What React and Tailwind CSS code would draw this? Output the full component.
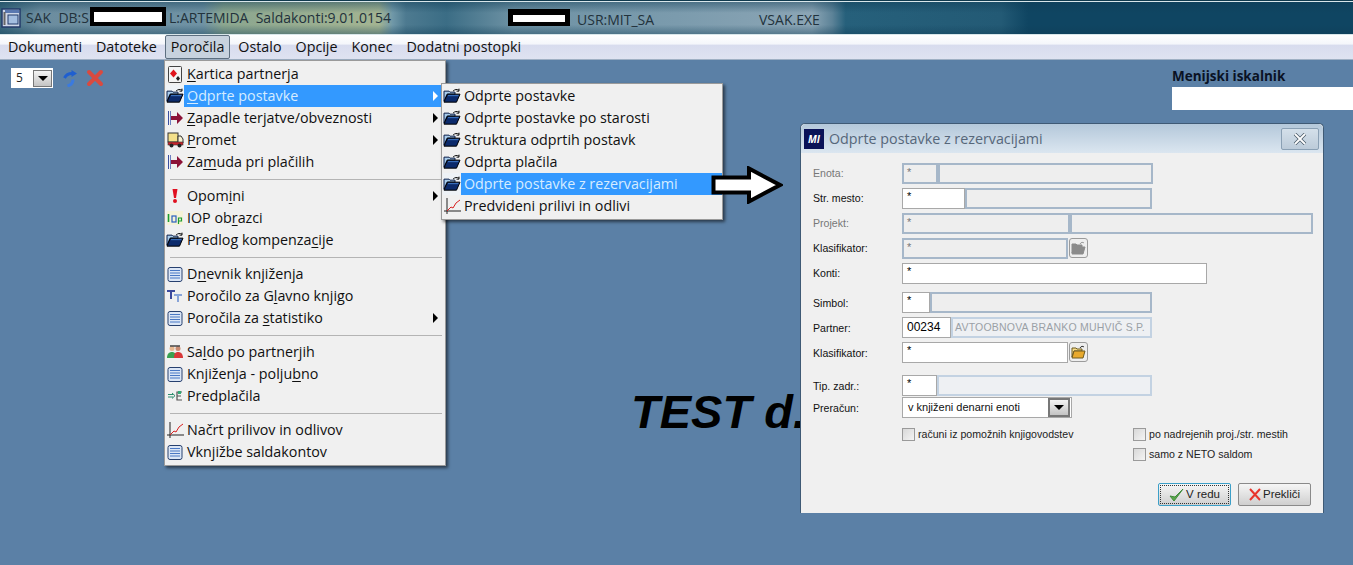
import React from "react";

const FONT = "font-['Open_Sans','Noto_Sans',sans-serif]";
const FORM = "font-['Liberation_Sans',sans-serif]";

function FolderIcon({ size = 18 }) {
  return (
    <svg width={size} height={size * 0.85} viewBox="0 0 18 15" className="shrink-0">
      <path d="M1 3h5l1 1h5v2H4L1 13z" fill="#a9cdec" stroke="#0a1f4a" strokeWidth="1" />
      <path d="M1 14l3.500-8H17l-3.500 8z" fill="#0b2a6b" stroke="#000" strokeWidth="1" />
      <path d="M5 7.500h10.500" stroke="#3f78c8" strokeWidth="1" />
      <path d="M10 3c2-2 4-2 6-1M16 0.500V3h-2.500" fill="none" stroke="#111" strokeWidth="1" />
    </svg>
  );
}
function CardIcon() {
  return (
    <svg width="16" height="17" viewBox="0 0 16 17" className="shrink-0">
      <rect x="1.500" y="0.500" width="13" height="16" rx="1" fill="#f4f4f4" stroke="#444" />
      <path d="M6.500 3.500l3.500 4-3.500 4-3.500-4z" fill="#e0141c" />
      <path d="M11 10l2 2.500L11 15l-2-2.500z" fill="#222" />
    </svg>
  );
}
function ArrowBarIcon() {
  return (
    <svg width="16" height="14" viewBox="0 0 16 14" className="shrink-0">
      <path d="M1.500 0v14" stroke="#3a4fa0" strokeWidth="1" />
      <path d="M3.500 0v14" stroke="#6d7fc0" strokeWidth="1" />
      <path d="M4 5h6V1l6 6-6 6V9H4z" fill="#8c1238" />
    </svg>
  );
}
function TruckIcon() {
  return (
    <svg width="17" height="16" viewBox="0 0 17 16" className="shrink-0">
      <rect x="1" y="1" width="10" height="9" fill="#f4e08a" stroke="#333" />
      <path d="M11 4h3l2 3v4H11z" fill="#f6f0d0" stroke="#333" />
      <rect x="1" y="10" width="15" height="3" fill="#c8242c" stroke="#333" strokeWidth="0.600" />
      <circle cx="4.500" cy="13.500" r="2" fill="#222" />
      <circle cx="12.500" cy="13.500" r="2" fill="#222" />
    </svg>
  );
}
function ExclamIcon() {
  return (
    <svg width="16" height="16" viewBox="0 0 16 16" className="shrink-0">
      <path d="M5.500 1h5L9 10H7z" fill="#e01020" />
      <circle cx="8" cy="13" r="2" fill="#e01020" />
    </svg>
  );
}
function IopIcon() {
  return (
    <svg width="16" height="14" viewBox="0 0 16 14" className="shrink-0">
      <rect x="0" y="0" width="16" height="14" fill="#f8f4c8" opacity="0.600" />
      <path d="M1.500 3v8" stroke="#1c9c30" strokeWidth="1.600" />
      <rect x="5" y="5" width="4" height="6" fill="none" stroke="#2a5fc0" strokeWidth="1.200" />
      <path d="M11.500 13V7h3v3h-3" fill="none" stroke="#1c9c30" strokeWidth="1.200" />
    </svg>
  );
}
function ListIcon() {
  return (
    <svg width="16" height="15" viewBox="0 0 16 15" className="shrink-0">
      <rect x="1" y="0.500" width="14" height="14" rx="2" fill="#dbe6f6" stroke="#27406f" />
      <path d="M3 3.500h10M3 6h10M3 8.500h10M3 11h10" stroke="#4a78c4" strokeWidth="1.200" />
    </svg>
  );
}
function TtIcon() {
  return (
    <svg width="16" height="14" viewBox="0 0 16 14" className="shrink-0">
      <path d="M0 1h8v2H5v7H3V3H0z" fill="#3c4a9c" />
      <path d="M7 5h8v2h-3v6h-2V7H7z" fill="#88a4d8" />
    </svg>
  );
}
function PeopleIcon() {
  return (
    <svg width="16" height="14" viewBox="0 0 16 14" className="shrink-0">
      <circle cx="5" cy="3.500" r="2.500" fill="#e8b890" />
      <circle cx="11" cy="3.500" r="2.500" fill="#c88a70" />
      <path d="M3 1h10" stroke="#444" strokeWidth="1.500" />
      <path d="M0 13c0-4 2-6 5-6s4 2 4 6z" fill="#3aa050" />
      <path d="M7 13c0-4 1-6 4-6s5 2 5 6z" fill="#d83838" />
    </svg>
  );
}
function PrepayIcon() {
  return (
    <svg width="15" height="10" viewBox="0 0 15 10" className="shrink-0">
      <path d="M0 3.500h5M0 6h5M4 2l3 2.700L4 7.500" fill="none" stroke="#2a8c6c" strokeWidth="1" />
      <path d="M14 1H9v8h5M9 5h4" fill="none" stroke="#555" strokeWidth="1.200" />
      <rect x="10" y="0" width="3" height="3" fill="#3a7" />
    </svg>
  );
}
function ChartIcon() {
  return (
    <svg width="17" height="16" viewBox="0 0 17 16" className="shrink-0">
      <path d="M3 0v16M0 13h17" stroke="#222" strokeWidth="1" />
      <path d="M3 13l4-4 2 1 3-5 4-3" fill="none" stroke="#d82020" strokeWidth="1" />
    </svg>
  );
}

function Label({ text, u }) {
  if (u === undefined) return <span>{text}</span>;
  return (
    <span>
      {text.slice(0, u)}
      <span className="underline underline-offset-2">{text[u]}</span>
      {text.slice(u + 1)}
    </span>
  );
}

function MenuItem({ icon, text, u, sub, active }) {
  return (
    <div className={`ml-[1px] flex h-[22px] items-center pr-[7px] ${active ? "bg-[#3399ff] text-[#d6ecff]" : "text-[#101010]"}`}>
      <div className={`flex h-[22px] w-[18px] shrink-0 items-center justify-center ${active ? "bg-[#eef2f6]" : ""}`}>{icon}</div>
      <div className="ml-[3px] flex-1 whitespace-nowrap pb-[1px]"><Label text={text} u={u} /></div>
      {sub && <div className={`h-0 w-0 border-y-[5px] border-l-[5px] border-y-transparent ${active ? "border-l-white" : "border-l-black"}`} />}
    </div>
  );
}
const Sep = () => (
  <div className="flex h-[12px] items-center pl-[5px] pr-[3px]">
    <div className="h-[1px] w-full bg-[#b4b4b4]" />
  </div>
);

function MainMenu() {
  return (
    <div className="absolute left-[164px] top-[60px] h-[406px] w-[282px] border border-[#9a9a9a] bg-[#f0f0f0] pt-[2px] text-[14.300px] shadow-[2px_2px_3px_rgba(0,0,0,0.55)]">
      <MenuItem icon={<CardIcon />} text="Kartica partnerja" u={0} />
      <MenuItem icon={<FolderIcon />} text="Odprte postavke" u={0} sub active />
      <MenuItem icon={<ArrowBarIcon />} text="Zapadle terjatve/obveznosti" u={0} sub />
      <MenuItem icon={<TruckIcon />} text="Promet" u={0} sub />
      <MenuItem icon={<ArrowBarIcon />} text="Zamuda pri plačilih" u={2} />
      <Sep />
      <MenuItem icon={<ExclamIcon />} text="Opomini" u={4} sub />
      <MenuItem icon={<IopIcon />} text="IOP obrazci" u={6} />
      <MenuItem icon={<FolderIcon />} text="Predlog kompenzacije" u={16} />
      <Sep />
      <MenuItem icon={<ListIcon />} text="Dnevnik knjiženja" u={1} />
      <MenuItem icon={<TtIcon />} text="Poročilo za Glavno knjigo" u={13} />
      <MenuItem icon={<ListIcon />} text="Poročila za statistiko" u={12} sub />
      <Sep />
      <MenuItem icon={<PeopleIcon />} text="Saldo po partnerjih" u={2} />
      <MenuItem icon={<ListIcon />} text="Knjiženja - poljubno" u={17} />
      <MenuItem icon={<PrepayIcon />} text="Predplačila" />
      <Sep />
      <MenuItem icon={<ChartIcon />} text="Načrt prilivov in odlivov" />
      <MenuItem icon={<ListIcon />} text="Vknjižbe saldakontov" />
    </div>
  );
}

function SubMenu() {
  return (
    <div className="absolute left-[441px] top-[83px] h-[137px] w-[282px] border border-[#9a9a9a] bg-[#f0f0f0] py-[1px] text-[14.300px] shadow-[2px_2px_3px_rgba(0,0,0,0.55)]">
      <MenuItem icon={<FolderIcon />} text="Odprte postavke" />
      <MenuItem icon={<FolderIcon />} text="Odprte postavke po starosti" />
      <MenuItem icon={<FolderIcon />} text="Struktura odprtih postavk" />
      <MenuItem icon={<FolderIcon />} text="Odprta plačila" />
      <MenuItem icon={<FolderIcon />} text="Odprte postavke z rezervacijami" active />
      <MenuItem icon={<ChartIcon />} text="Predvideni prilivi in odlivi" />
    </div>
  );
}

function Field({ w, value, on, muted }) {
  const base = on
    ? "border border-[#a8a8a8] bg-white pl-[4px] text-black"
    : muted
    ? "border-2 border-[#c3d2e2] bg-[#eef0f3] pl-[2px] text-[#9aa0a6]"
    : "border-2 border-[#a6b7c9] bg-[#eeeeee] pl-[3px] text-[#777]";
  return (
    <div style={{ width: w }} className={`h-full shrink-0 overflow-hidden whitespace-nowrap text-[11px] leading-[15px] ${base}`}>
      {value}
    </div>
  );
}

function Row({ label, mt, dim, low, children }) {
  return (
    <div style={{ marginTop: mt }} className="flex h-[21px] items-stretch">
      <div className={`flex w-[89px] shrink-0 items-center text-[10.600px] ${low ? "pt-[2px]" : ""} ${dim ? "text-[#777]" : "text-[#111]"}`}>{label}</div>
      <div className="flex h-[21px]">{children}</div>
    </div>
  );
}

function FolderBtn({ on }) {
  return (
    <div className="ml-[1px] flex h-[20px] w-[19px] items-center justify-center rounded-[3px] border border-[#9b9b9b] bg-[#eeeeee]">
      <svg width="15" height="14" viewBox="0 0 15 14">
        <path d="M1 3h4l1 1h5v2H3L1 12z" fill={on ? "#f6dc88" : "#8b8b8b"} stroke={on ? "#6d5a20" : "#8b8b8b"} />
        <path d="M1 13l2-7h11l-2 7z" fill={on ? "#e8a92c" : "#8b8b8b"} stroke={on ? "#6d5a20" : "#8b8b8b"} />
        <path d="M9 3c1-2 3-2 4-1" fill="none" stroke={on ? "#333" : "#999"} />
      </svg>
    </div>
  );
}

function Check({ label }) {
  return (
    <div className="flex h-[14px] items-center gap-[3px] text-[10.600px] leading-[14px] text-[#222]">
      <div className="h-[13px] w-[13px] border border-[#9a9a9a] bg-gradient-to-br from-[#d8d8d8] to-[#f4f4f4]" />
      <span className="whitespace-nowrap">{label}</span>
    </div>
  );
}

function Dialog() {
  return (
    <div className={`absolute left-[800px] top-[123px] h-[390px] w-[524px] rounded-t-[5px] border-x border-t border-[#3f5a75] bg-[#f0f0f0] ${FORM}`}>
      <div className={`flex h-[29px] items-center rounded-t-[5px] bg-gradient-to-b from-[#b4c8da] to-[#dbe6f0] pl-[3px] pr-[4px] ${FONT}`}>
        <div className="flex h-[20px] w-[20px] items-center justify-center bg-[#0a1258] text-[10px] font-bold italic leading-none text-white">MI</div>
        <div className="ml-[5px] flex-1 text-[14.300px] text-[#56677a]">Odprte postavke z rezervacijami</div>
        <div className="flex h-[22px] w-[38px] items-center justify-center rounded-[2px] border border-[#8aa0b4] bg-gradient-to-b from-[#d4e0ea] to-[#bccbd9]">
          <svg width="14" height="12" viewBox="0 0 14 12">
            <path d="M2 1l10 10M12 1L2 11" fill="none" stroke="#4a5a68" strokeWidth="3.400" />
            <path d="M2 1l10 10M12 1L2 11" fill="none" stroke="#fff" strokeWidth="1.800" />
          </svg>
        </div>
      </div>
      <div className="pl-[12px] pt-[10px]">
        <Row label="Enota:" dim mt={0}><Field w={36} value="*" /><Field w={215} /></Row>
        <Row label="Str. mesto:" mt={4}><Field w={63} value="*" on /><Field w={187} /></Row>
        <Row label="Projekt:" dim mt={4}><Field w={168} value="*" /><Field w={243} /></Row>
        <Row label="Klasifikator:" mt={4}><Field w={166} value="*" /><FolderBtn /></Row>
        <Row label="Konti:" mt={4}><Field w={305} value="*" on /></Row>
        <Row label="Simbol:" low mt={8}><Field w={28} value="*" on /><Field w={222} /></Row>
        <Row label="Partner:" low mt={4}>
          <Field w={49} value={<span className="text-[12px] leading-[18px]">00234</span>} on />
          <Field w={201} muted value={<span className="text-[10.500px] leading-[16px] tracking-[0.2px]">AVTOOBNOVA BRANKO MUHVIČ S.P.</span>} />
        </Row>
        <Row label="Klasifikator:" low mt={4}><Field w={166} value="*" on /><FolderBtn on /></Row>
        <Row label="Tip. zadr.:" low mt={12}><Field w={35} value="*" on /><Field w={215} muted /></Row>
        <Row label="Preračun:" low mt={1}>
          <div className="flex w-[170px] items-center justify-between border border-[#a8a8a8] bg-white pl-[5px] pr-[1px] text-[11px] text-[#111]">
            <span>v knjiženi denarni enoti</span>
            <div className="flex h-[19px] w-[22px] items-center justify-center border-2 border-[#777] bg-gradient-to-b from-[#f4f4f4] to-[#c4c4c4]">
              <div className="h-0 w-0 border-x-[5px] border-t-[5px] border-x-transparent border-t-black" />
            </div>
          </div>
        </Row>
        <div className="mt-[9px] flex pl-[89px]">
          <div className="w-[231px]"><Check label="računi iz pomožnih knjigovodstev" /></div>
          <div className="flex flex-col gap-[6px]">
            <Check label="po nadrejenih proj./str. mestih" />
            <Check label="samo z NETO saldom" />
          </div>
        </div>
        <div className="mt-[22px] flex justify-end gap-[7px] pr-[12px]">
          <div className="flex h-[23px] w-[73px] items-center justify-center rounded-[2px] border border-[#3c9fc8] bg-gradient-to-b from-[#f6f6f6] to-[#cfcfcf] text-[11.500px] text-[#222] outline-1 -outline-offset-3 outline-dotted outline-[#333]">
            <svg width="17" height="14" viewBox="0 0 17 14"><path d="M1 8l4 5 9-12-8 8z" fill="#5aa84a" stroke="#3f8a3a" strokeWidth="1" /></svg>
            <span>V redu</span>
          </div>
          <div className="flex h-[23px] w-[73px] items-center justify-center gap-[2px] rounded-[2px] border border-[#8a8a8a] bg-gradient-to-b from-[#f6f6f6] to-[#cfcfcf] text-[11.500px] text-[#222]">
            <svg width="12" height="13" viewBox="0 0 12 13"><path d="M1 1l10 11M11 1L1 12" stroke="#e8352c" strokeWidth="2" /></svg>
            <span>Prekliči</span>
          </div>
        </div>
      </div>
    </div>
  );
}

function BigArrow() {
  return (
    <svg width="72" height="38" viewBox="0 0 72 38" className="absolute left-[711px] top-[166px]">
      <path d="M2.500 11.500H38V2.500L69 19 38 35.500V26.500H2.500z" fill="#fff" stroke="#000" strokeWidth="4" strokeLinejoin="miter" />
    </svg>
  );
}

function Redact({ className, inner }) {
  return (
    <div className={`absolute bg-black ${className}`}>
      <div className={`absolute bg-white ${inner}`} />
    </div>
  );
}

export default function App() {
  return (
    <div className={`relative h-[565px] w-[1353px] overflow-hidden bg-[#5b80a6] ${FONT}`}>
      <div className="relative flex h-[35px] items-center border-t border-[#103a4e] bg-[linear-gradient(180deg,rgba(15,60,85,0.5),rgba(15,60,85,0)_35%,rgba(15,60,85,0)_70%,rgba(15,60,85,0.45)),linear-gradient(90deg,#3c6b80_0%,#6c8d9f_3%,#6f92a4_15%,#8ba68f_16.500%,#a3b492_28%,#7098a8_29%,#4d7a90_30%,#3b6d85_33%,#6e92a4_38%,#7b9bad_50%,#8ba5b5_60%,#5d8398_61.500%,#26607b_62.500%,#235a75_74%,#0f4562_76%,#0f4562_100%)] text-[14px] text-[#22323c] shadow-[inset_0_1px_#d8e6ea,inset_0_-1px_#d8e6ea]">
        <svg width="20" height="20" viewBox="0 0 20 20" className="ml-[1px] shrink-0">
          <rect x="1" y="1" width="18" height="18" fill="#cfd8e8" stroke="#233a6a" strokeWidth="1.500" />
          <rect x="4" y="2" width="14" height="3" fill="#5a78b0" />
          <rect x="7" y="7" width="10" height="9" fill="#a4bee0" stroke="#233a6a" />
          <path d="M3.500 4v13" stroke="#666" strokeWidth="2" />
        </svg>
        <span className="ml-[5px] whitespace-pre pb-[2px]">SAK  DB:S</span>
        <span className="ml-[80px] whitespace-pre pb-[2px]">L:ARTEMIDA  Saldakonti:9.01.0154</span>
        <span className="absolute left-[577px] top-[8px] whitespace-pre">USR:MIT_SA</span>
        <span className="absolute left-[759px] top-[8px] whitespace-pre">VSAK.EXE</span>
      </div>
      <Redact className="left-[90px] top-[7px] h-[19px] w-[76px]" inner="left-[4px] top-[5px] h-[10px] w-[68px]" />
      <Redact className="left-[508px] top-[9px] h-[17px] w-[62px]" inner="left-[5px] top-[6px] h-[7px] w-[52px]" />

      <div className="flex h-[25px] items-center gap-[14px] border-b border-[#9fb0c4] bg-[linear-gradient(180deg,#ffffff,#f4f6fb_38%,#d8dcee_42%,#dfe3f1)] pl-[8px] text-[14.300px] text-[#101010]">
        <span>Dokumenti</span>
        <span>Datoteke</span>
        <span className="-mx-[6px] rounded-[2px] border border-[#5d6f80] bg-[#c7d2de] px-[5px]">Poročila</span>
        <span>Ostalo</span>
        <span>Opcije</span>
        <span>Konec</span>
        <span>Dodatni postopki</span>
      </div>

      <div className="flex items-start justify-between pt-[8px]">
        <div className="flex items-center gap-[9px] pl-[11px]">
          <div className="flex h-[20px] w-[42px] items-center justify-between bg-white pl-[5px] pr-[1px] text-[12px] text-[#222]">
            <span>5</span>
            <div className="flex h-[17px] w-[19px] items-center justify-center border border-[#777] bg-gradient-to-b from-[#f4f4f4] to-[#c4c4c4]">
              <div className="h-0 w-0 border-x-[5px] border-t-[5px] border-x-transparent border-t-black" />
            </div>
          </div>
          <svg width="15" height="17" viewBox="0 0 15 17">
            <path d="M2.500 8C4 5 7 3.500 10 3.500" fill="none" stroke="#1f5fd0" strokeWidth="3" />
            <path d="M9.500 0l5.500 3.500L9.500 7z" fill="#1f5fd0" />
            <path d="M11 9.500C11 12.500 9 15 5.500 16" fill="none" stroke="#3a7ae0" strokeWidth="3" />
          </svg>
          <svg width="18" height="18" viewBox="0 0 18 18">
            <path d="M3 3l12 12M15 3L3 15" stroke="#d94a40" strokeWidth="4" strokeLinecap="round" />
          </svg>
        </div>
        <div className="w-[181px]">
          <div className="text-[13.500px] font-bold leading-[17px] text-[#0a1224]">Menijski iskalnik</div>
          <div className="mt-[2px] h-[23px] bg-white" />
        </div>
      </div>

      <div className="absolute left-[631px] top-[383px] whitespace-nowrap font-['Liberation_Sans',sans-serif] text-[47px] font-bold italic leading-[58px] text-black">TEST d.o.o.</div>

      <MainMenu />
      <SubMenu />
      <BigArrow />
      <Dialog />
    </div>
  );
}
